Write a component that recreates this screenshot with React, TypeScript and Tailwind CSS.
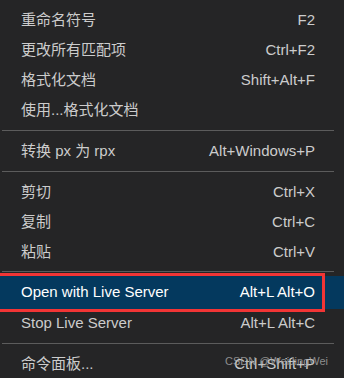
type Item = { label: string; keys?: string };

const groupA: Item[] = [
  { label: "重命名符号", keys: "F2" },
  { label: "更改所有匹配项", keys: "Ctrl+F2" },
  { label: "格式化文档", keys: "Shift+Alt+F" },
  { label: "使用...格式化文档" },
];

const groupB: Item[] = [
  { label: "剪切", keys: "Ctrl+X" },
  { label: "复制", keys: "Ctrl+C" },
  { label: "粘贴", keys: "Ctrl+V" },
];

function Row({ item, h = "h-[30px]" }: { item: Item; h?: string }) {
  return (
    <div className={`flex ${h} items-center justify-between pl-[21px] pr-[29px] text-[#cccccc]`}>
      <span>{item.label}</span>
      {item.keys && <span>{item.keys}</span>}
    </div>
  );
}

function Sep({ h = "h-[11px]" }: { h?: string }) {
  return (
    <div className={`flex ${h} items-center`}>
      <div className="ml-[2px] mr-[10px] h-px flex-1 bg-[#5c5c5c]" />
    </div>
  );
}

export default function App() {
  return (
    <div
      className="h-[378px] w-[344px] overflow-hidden bg-[#252526] pt-[5px] text-[15px]"
      style={{ fontFamily: '"Liberation Sans", "Noto Sans CJK SC", sans-serif' }}
    >
      {groupA.map((it) => (
        <Row key={it.label} item={it} />
      ))}
      <Sep />
      <Row item={{ label: "转换 px 为 rpx", keys: "Alt+Windows+P" }} />
      <Sep />
      {groupB.map((it) => (
        <Row key={it.label} item={it} />
      ))}
      <Sep h="h-[9px]" />
      <div className="relative flex h-[33px] items-center justify-between bg-[#04395e] pl-[21px] pr-[29px] text-white">
        <span>Open with Live Server</span>
        <span>Alt+L Alt+O</span>
        <div className="absolute -top-[3px] -bottom-[3px] -left-[3px] right-[19px] border-[3px] border-[#f23535]" />
      </div>
      <Row item={{ label: "Stop Live Server", keys: "Alt+L Alt+C" }} h="h-[29px]" />
      <Sep />
      <div className="relative">
        <Row item={{ label: "命令面板...", keys: "Ctrl+Shift+P" }} />
        <span className="absolute right-[16px] top-[4px] text-[11px] text-[#a8a8a8] opacity-80">
          CSDN @WeiJingWei
        </span>
      </div>
    </div>
  );
}
